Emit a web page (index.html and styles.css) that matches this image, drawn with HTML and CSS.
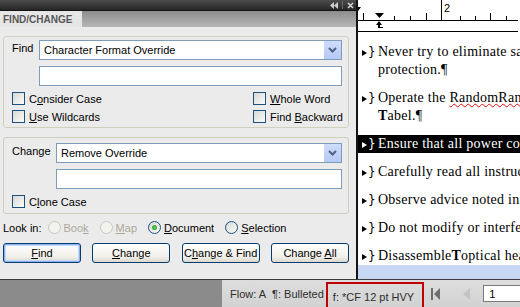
FILE: index.html
```html
<!DOCTYPE html>
<html lang="en">

<head>
    <meta charset="utf-8">
    <meta name="viewport" content="width=device-width, initial-scale=1.0">
    <title>Find/Change</title>
    <link rel="stylesheet" href="styles.css">
</head>

<body>
    <div class="screen">
        <div class="main">
            <section class="panel">
                <div class="titlebar">
                    <svg width="8" height="7" viewBox="0 0 8 7">
                        <polygon points="0,3.5 4,0 4,7" fill="#cfcfcf" />
                        <polygon points="4,3.5 8,0 8,7" fill="#cfcfcf" />
                    </svg>
                    <span class="sep"></span>
                    <svg width="7" height="7" viewBox="0 0 7 7">
                        <path d="M1 1 L6 6 M6 1 L1 6" stroke="#d4d4d4" stroke-width="1.6" />
                    </svg>
                </div>
                <div class="tabs">
                    <div class="tab">FIND/CHANGE</div>
                </div>

                <div class="panel-body">
                    <div class="group find-group">
                        <div class="field-row">
                            <span class="field-label">Find</span>
                            <div class="fields">
                                <div class="select">
                                    <span>Character Format Override</span>
                                    <span class="arrow">
                                        <svg width="9" height="6" viewBox="0 0 9 6">
                                            <path d="M1 1 L4.5 4.5 L8 1" fill="none" stroke="#4d6185" stroke-width="2" />
                                        </svg>
                                    </span>
                                </div>
                                <div class="textbox"></div>
                            </div>
                        </div>
                        <div class="checks">
                            <label class="check"><span class="box"></span><span>C<u>o</u>nsider Case</span></label>
                            <label class="check"><span class="box"></span><span><u>W</u>hole Word</span></label>
                            <label class="check"><span class="box"></span><span><u>U</u>se Wildcards</span></label>
                            <label class="check"><span class="box"></span><span>Find <u>B</u>ackward</span></label>
                        </div>
                    </div>

                    <div class="group change-group">
                        <div class="field-row">
                            <span class="field-label">Change</span>
                            <div class="fields">
                                <div class="select">
                                    <span>Remove Override</span>
                                    <span class="arrow">
                                        <svg width="9" height="6" viewBox="0 0 9 6">
                                            <path d="M1 1 L4.5 4.5 L8 1" fill="none" stroke="#4d6185" stroke-width="2" />
                                        </svg>
                                    </span>
                                </div>
                                <div class="textbox"></div>
                            </div>
                        </div>
                        <div class="checks">
                            <label class="check"><span class="box"></span><span>C<u>l</u>one Case</span></label>
                        </div>
                    </div>

                    <div class="lookin">
                        <span>Look in:</span>
                        <label class="option disabled"><span class="radio"></span><span>Boo<u>k</u></span></label>
                        <label class="option disabled"><span class="radio"></span><span><u>M</u>ap</span></label>
                        <label class="option"><span class="radio checked"></span><span><u>D</u>ocument</span></label>
                        <label class="option"><span class="radio"></span><span><u>S</u>election</span></label>
                    </div>

                    <div class="buttons">
                        <button class="default"><u>F</u>ind</button>
                        <button><u>C</u>hange</button>
                        <button>C<u>h</u>ange &amp; Find</button>
                        <button>Change <u>A</u>ll</button>
                    </div>
                </div>
            </section>

            <section class="doc">
                <svg class="ruler" width="160" height="32" viewBox="0 0 160 32">
                    <polygon points="0,7 3,7 0,11" fill="#000" />
                    <line x1="0" y1="20.5" x2="160" y2="20.5" stroke="#000" />
                    <line x1="83.5" y1="0" x2="83.5" y2="20" stroke="#000" />
                    <text x="86" y="12" font-family="Liberation Sans" font-size="11">2</text>
                    <g stroke="#000">
                        <line x1="5.5" y1="13" x2="5.5" y2="20" />
                        <line x1="36.5" y1="16" x2="36.5" y2="20" />
                        <line x1="52.5" y1="16" x2="52.5" y2="20" />
                        <line x1="68.5" y1="13" x2="68.5" y2="20" />
                        <line x1="102.5" y1="16" x2="102.5" y2="20" />
                        <line x1="117.5" y1="16" x2="117.5" y2="20" />
                        <line x1="132.5" y1="13" x2="132.5" y2="20" />
                        <line x1="148.5" y1="16" x2="148.5" y2="20" />
                    </g>
                    <polygon points="17,13 26,13 21.5,18" fill="#000" />
                    <polygon points="18,25 24,25 21,21" fill="#000" />
                    <rect x="20" y="25" width="2" height="3" fill="#000" />
                    <rect x="20" y="27" width="5" height="1" fill="#000" />
                    <line x1="0" y1="31.5" x2="160" y2="31.5" stroke="#000" />
                </svg>

                <div class="story">
                    <p class="para"><span class="mark"><i></i>}</span>Never try to eliminate sa<br>protection.¶</p>
                    <p class="para"><span class="mark"><i></i>}</span>Operate the <span class="typo">RandomRan</span><br><b>T</b>abel.¶</p>
                    <p class="para selected"><span class="mark"><i></i>}</span>Ensure that all power co</p>
                    <p class="para"><span class="mark"><i></i>}</span>Carefully read all instruc</p>
                    <p class="para"><span class="mark"><i></i>}</span>Observe advice noted in</p>
                    <p class="para"><span class="mark"><i></i>}</span>Do not modify or interfe</p>
                    <p class="para"><span class="mark"><i></i>}</span>Disassemble<b>T</b>optical hea</p>
                </div>

                <div class="frame-edge"></div>
            </section>
        </div>

        <div class="status-row">
            <div class="pasteboard"></div>
            <div class="status">
                <span class="flow">Flow: A</span>
                <span class="style">¶: Bulleted</span>
                <span class="charstyle">f: *CF 12 pt HVY</span>
                <svg class="first" width="9" height="12" viewBox="0 0 9 12">
                    <rect x="0" y="0" width="2" height="12" fill="#6d6d6d" />
                    <polygon points="3,6 9,0 9,12" fill="#6d6d6d" />
                </svg>
                <svg class="prev" width="7" height="12" viewBox="0 0 7 12">
                    <polygon points="0,6 7,0 7,12" fill="#c3c3c3" />
                </svg>
                <span class="page">1</span>
            </div>
        </div>
    </div>
</body>

</html>
```

FILE: styles.css
```css
body {
    margin: 0;
    font-family: "Liberation Sans", Arial, sans-serif;
    font-size: 11px;
    color: #000;
}

.screen {
    width: 520px;
    height: 307px;
    overflow: hidden;
    display: flex;
    flex-direction: column;
}

.main {
    display: flex;
    height: 279px;
}

/* panel */

.panel {
    width: 356px;
    flex-shrink: 0;
    display: flex;
    flex-direction: column;
    background: #ebebeb;
}

.titlebar {
    height: 10px;
    background: linear-gradient(#4c4c4c, #262626);
    display: flex;
    justify-content: flex-end;
    align-items: center;
    gap: 4px;
    padding-right: 2px;
}

.sep {
    width: 1px;
    height: 8px;
    background: #6a6a6a;
}

.tabs {
    height: 16px;
    border-top: 1px solid #141414;
    background: linear-gradient(#8d8d8d, #b6b6b6);
    display: flex;
}

.tab {
    width: 79px;
    padding-left: 3px;
    background: #e6e6e6;
    color: #575757;
    font-size: 10px;
    font-weight: bold;
    line-height: 17px;
}

.panel-body {
    flex: 1;
    padding: 9px 7px 0 3px;
}

.group {
    border: 1px solid #d0d0bf;
    border-radius: 3px;
}

.find-group {
    padding: 3px 6px 4px 8px;
}

.change-group {
    margin-top: 9px;
    padding: 5px 6px 5px 8px;
}

.field-row {
    display: flex;
}

.field-label {
    padding-top: 2px;
}

.find-group .field-label {
    width: 27px;
}

.change-group .field-label {
    width: 44px;
}

.fields {
    flex: 1;
    display: flex;
    flex-direction: column;
    gap: 6px;
}

.select,
.textbox {
    height: 18px;
    border: 1px solid #7f9db9;
    background: #fff;
}

.select {
    display: flex;
    justify-content: space-between;
    align-items: center;
    padding-left: 4px;
}

.arrow {
    width: 17px;
    height: 18px;
    display: flex;
    align-items: center;
    justify-content: center;
    background: linear-gradient(#cfdcfb, #b5c9f6);
}

.checks {
    margin-top: 6px;
    display: grid;
    grid-template-columns: 241px auto;
    row-gap: 5px;
}

.check {
    display: flex;
    align-items: center;
    gap: 4px;
    height: 13px;
    white-space: nowrap;
}

.box {
    width: 11px;
    height: 11px;
    border: 1px solid #1c5180;
    background: linear-gradient(135deg, #d8d8d2, #fbfbfa);
}

/* look in */

.lookin {
    margin-top: 6px;
    height: 15px;
    display: flex;
    align-items: center;
    gap: 6px;
    white-space: nowrap;
}

.option {
    display: flex;
    align-items: center;
    gap: 3px;
    margin-right: 5px;
}

.radio {
    position: relative;
    width: 11px;
    height: 11px;
    border: 1px solid #1c5180;
    border-radius: 50%;
    background: linear-gradient(135deg, #d8d8d2, #fbfbfa);
}

.radio.checked::after {
    content: "";
    position: absolute;
    left: 3px;
    top: 3px;
    width: 5px;
    height: 5px;
    border-radius: 50%;
    background: radial-gradient(#5bd35b, #1f9a1f);
}

.disabled {
    color: #aca899;
}

.disabled .radio {
    border-color: #cac8bb;
    background: #f2f2ee;
}

/* buttons */

.buttons {
    margin-top: 8px;
    display: flex;
    justify-content: space-between;
}

button {
    width: 78px;
    height: 20px;
    padding: 0;
    font-family: "Liberation Sans", Arial, sans-serif;
    font-size: 11px;
    color: #000;
    border: 1px solid #003c74;
    border-radius: 3px;
    background: linear-gradient(#ffffff, #f1f0ea 70%, #dcd8cc);
}

button.default {
    box-shadow: inset 0 0 0 1px #8fb1ef, inset 0 0 0 2px #c6d7f7;
}

/* document */

.doc {
    flex: 1;
    overflow: hidden;
    display: flex;
    flex-direction: column;
    border-left: 2px solid #141414;
    background: #fff;
    font-family: "Liberation Serif", "Times New Roman", serif;
    font-size: 14px;
}

.ruler {
    display: block;
    flex-shrink: 0;
}

.story {
    flex: 1;
    padding-top: 11px;
    overflow: hidden;
}

.para {
    margin: 0 0 10px;
    padding-left: 20px;
    line-height: 18px;
    white-space: nowrap;
    letter-spacing: 0.25px;
}

.para.selected {
    background: #000;
    color: #fff;
}

.mark {
    display: inline-block;
    width: 18px;
    margin-left: -18px;
    padding-left: 2px;
    box-sizing: border-box;
    font-family: "DejaVu Sans", sans-serif;
    font-size: 12px;
    letter-spacing: 0;
}

.mark i {
    display: inline-block;
    width: 0;
    height: 0;
    margin-right: 1px;
    border-left: 5px solid currentColor;
    border-top: 3.5px solid transparent;
    border-bottom: 3.5px solid transparent;
}

.typo {
    text-decoration: underline wavy #e01010;
    text-decoration-thickness: 1px;
}

.frame-edge {
    height: 14px;
    flex-shrink: 0;
    background: #c8d8f4;
}

/* status bar */

.status-row {
    flex: 1;
    display: flex;
    border-top: 1px solid #3c3c3c;
}

.pasteboard {
    width: 222px;
    flex-shrink: 0;
    background: #8b8b8b;
}

.status {
    flex: 1;
    display: flex;
    align-items: center;
    padding-left: 8px;
    background: linear-gradient(#dddddd, #d2d2d2);
    color: #2e2e2e;
    white-space: nowrap;
    overflow: hidden;
}

.status > * {
    flex-shrink: 0;
}

.flow {
    margin-right: 6px;
}

.charstyle {
    align-self: stretch;
    margin: 2px 0 -3px 2px;
    padding: 2px 8px 0 5px;
    display: flex;
    align-items: center;
    border: 2px solid #c00000;
}

.first {
    margin-left: 7px;
}

.prev {
    margin-left: 23px;
}

.page {
    margin-left: 13px;
    width: 40px;
    height: 17px;
    line-height: 17px;
    padding-left: 5px;
    border: 1px solid #7a7a7a;
    background: #fff;
    color: #000;
    box-sizing: border-box;
}
```
